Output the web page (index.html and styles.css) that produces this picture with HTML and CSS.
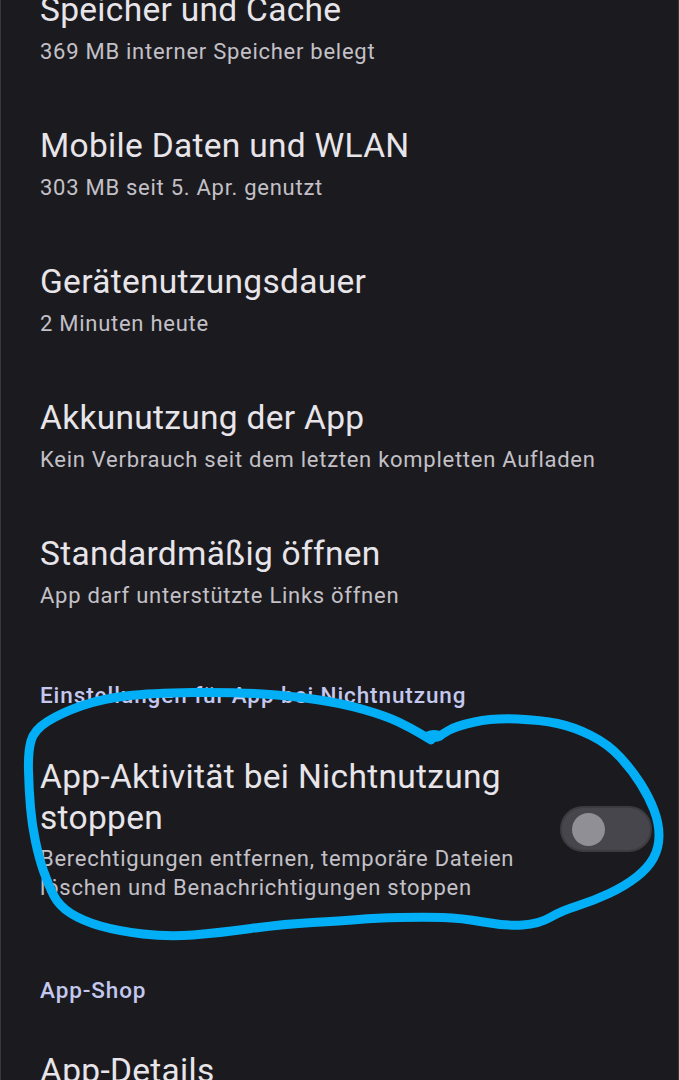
FILE: index.html
```html
<!DOCTYPE html>
<html lang="de">
<head>
<meta charset="utf-8">
<title>App-Info</title>
<link rel="stylesheet" href="styles.css">
</head>
<body>
<div class="screen">
  <div class="list list--top">
    <div class="item">
      <div class="item-text">
        <div class="title">Speicher und Cache</div>
        <div class="summary">369 MB interner Speicher belegt</div>
      </div>
    </div>
    <div class="item">
      <div class="item-text">
        <div class="title">Mobile Daten und WLAN</div>
        <div class="summary">303 MB seit 5. Apr. genutzt</div>
      </div>
    </div>
    <div class="item">
      <div class="item-text">
        <div class="title">Gerätenutzungsdauer</div>
        <div class="summary">2 Minuten heute</div>
      </div>
    </div>
    <div class="item">
      <div class="item-text">
        <div class="title">Akkunutzung der App</div>
        <div class="summary">Kein Verbrauch seit dem letzten kompletten Aufladen</div>
      </div>
    </div>
    <div class="item">
      <div class="item-text">
        <div class="title">Standardmäßig öffnen</div>
        <div class="summary">App darf unterstützte Links öffnen</div>
      </div>
    </div>
  </div>

  <div class="category">Einstellungen für App bei Nichtnutzung</div>
  <div class="item item--switch">
    <div class="item-text">
      <div class="title">App-Aktivität bei Nichtnutzung stoppen</div>
      <div class="summary">Berechtigungen entfernen, temporäre Dateien löschen und Benachrichtigungen stoppen</div>
    </div>
    <div class="switch"><span class="thumb"></span></div>
  </div>

  <div class="category category--second">App-Shop</div>
  <div class="item">
    <div class="item-text">
      <div class="title">App-Details</div>
    </div>
  </div>

  <svg class="scribble" width="679" height="1080" viewBox="0 0 679 1080" aria-hidden="true">
    <path d="M430 740 L420 734 Q410 728 397.5 722 Q385 716 362.5 709.5 Q340 703 315 699.5 Q290 696 261.5 694 Q233 692 191.5 692.5 Q150 693 125 696 Q100 699 80 706 Q60 713 46.5 721.5 Q33 730 30 741 Q27 752 27.5 771 Q28 790 29.5 807.5 Q31 825 34.5 841.5 Q38 858 42.5 871 Q47 884 52.5 895 Q58 906 70 913.5 Q82 921 99.5 926 Q117 931 142 934 Q167 937 192 935 Q217 933 250 928.5 Q283 924 311.5 922.5 Q340 921 357.5 919.5 Q375 918 399 917.5 Q423 917 441.5 917.5 Q460 918 482.5 922 Q505 926 521.5 925 Q538 924 549 917.5 Q560 911 576 906 Q592 901 608 893.5 Q624 886 635.5 877 Q647 868 652.5 858 Q658 848 658 835.5 Q658 823 653 810 Q648 797 639.5 783.5 Q631 770 619 757 Q607 744 590 735.5 Q573 727 556.5 723.5 Q540 720 516 719 Q492 718 473.5 722 Q455 726 447.5 730.5 L440 735"/>
    <ellipse cx="433" cy="736" rx="11" ry="6"/>
  </svg>
</div>
</body>
</html>
```
FILE: styles.css
```css
* {
  box-sizing: border-box;
}

html, body {
  margin: 0;
  padding: 0;
  background: #1b1b1f;
}

body {
  width: 679px;
  height: 1080px;
  overflow: hidden;
  font-family: "Roboto", "Noto Sans", sans-serif;
}

.screen {
  position: relative;
  width: 679px;
  height: 1080px;
  overflow: hidden;
  background: #1b1b1f;
  border-left: 1px solid #38373c;
  border-right: 1px solid #38373c;
}

.list--top {
  margin-top: -40px;
}

.item {
  display: flex;
  align-items: center;
  gap: 24px;
  padding: 30px 26px 30px 39px;
}

.item-text {
  flex: 1;
  min-width: 0;
}

.title {
  font-size: 33.5px;
  line-height: 40px;
  color: #e8e5ea;
  font-weight: 400;
  letter-spacing: 0.3px;
}

.summary {
  margin-top: 8px;
  font-size: 22px;
  line-height: 28px;
  color: #c3c0c7;
  letter-spacing: 0.73px;
}

.item--switch .title {
  line-height: 41px;
}

.item--switch .summary {
  margin-top: 6px;
  line-height: 29px;
}

.category {
  padding: 41px 39px 17px;
  font-size: 22.5px;
  line-height: 28px;
  font-weight: 500;
  letter-spacing: 0.9px;
  color: #c4c8ee;
}

.category--second {
  padding-top: 44px;
}

.switch {
  flex: none;
  width: 92px;
  height: 46px;
  border-radius: 23px;
  background: #48464d;
  border: 2px solid #3c3b40;
  display: flex;
  align-items: center;
  padding-left: 10px;
}

.thumb {
  width: 33px;
  height: 33px;
  border-radius: 50%;
  background: #918f96;
}

.scribble {
  position: absolute;
  top: 0;
  left: 0;
  pointer-events: none;
}

.scribble path {
  fill: none;
  stroke: #02aef5;
  stroke-width: 9;
  stroke-linecap: round;
  stroke-linejoin: round;
}

.scribble ellipse {
  fill: #02aef5;
}
```
